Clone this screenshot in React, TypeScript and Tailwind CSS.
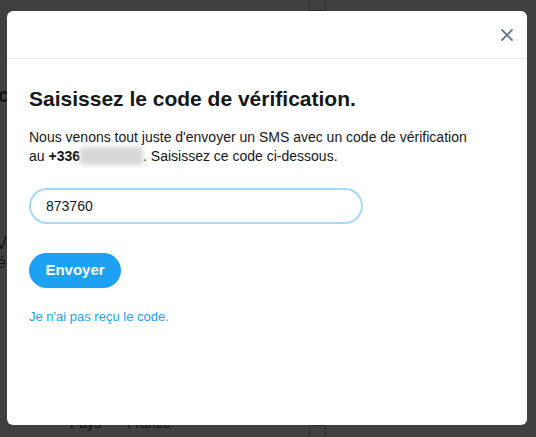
import { useState } from 'react'

// Backdrop page (dimmed) with the verification modal on top
export default function App() {
  const [code, setCode] = useState('873760')

  return (
    <div className="relative w-[536px] h-[437px] overflow-hidden bg-[#404040] font-['Liberation_Sans',Arial,sans-serif]">
      {/* Dimmed page behind the overlay */}
      <div className="absolute inset-0 text-[#111]">
        <div className="absolute left-[309px] top-[-4px] w-[17px] h-[15px] border border-[#2a2a2a] rounded-[2px]" />
        <span className="absolute left-[-2px] top-[80px] text-[20px] font-bold">c</span>
        <span className="absolute left-[-4px] top-[232px] text-[16px]">Ve</span>
        <span className="absolute left-[-3px] top-[251px] text-[16px]">é</span>
        <span className="absolute left-[70px] top-[413px] text-[14px]">Pays</span>
        <span className="absolute left-[127px] top-[413px] text-[14px]">France</span>
        <div className="absolute left-[309px] top-[425px] w-[17px] h-[15px] border border-[#2a2a2a] rounded-[2px]" />
      </div>

      {/* Modal */}
      <div className="relative pt-[11px] pl-[7px]">
        <div className="w-[520px] h-[414px] bg-white rounded-[6px] flex flex-col">
          <div className="h-[48px] border-b border-[#e6ecf0] flex items-center justify-end pr-[14px]">
            <button className="w-[12px] h-[12px] flex items-center justify-center">
              <svg width="12" height="12" viewBox="0 0 12 12">
                <path d="M1 1 L11 11 M11 1 L1 11" stroke="#657786" strokeWidth="1.8" strokeLinecap="round" />
              </svg>
            </button>
          </div>

          <div className="px-[22px] pt-[27px] flex flex-col">
            <h1 className="text-[21px] leading-[26px] font-bold text-[#14171a]">
              Saisissez le code de vérification.
            </h1>
            <p className="mt-[16px] text-[14px] leading-[19px] text-[#14171a]">
              Nous venons tout juste d'envoyer un SMS avec un code de vérification
              <br />
              au <span className="font-bold">+336</span>
              <span className="inline-block w-[63px] h-[18px] align-top bg-[#d8d8d8] blur-[2px]" />. Saisissez ce code ci-dessous.
            </p>

            <input
              type="text"
              value={code}
              onChange={(e) => setCode(e.target.value)}
              className="mt-[22px] w-[334px] h-[36px] rounded-full border-2 border-[#a4d9f9] px-[15px] text-[14px] text-[#14171a] outline-none"
            />

            <button className="mt-[29px] self-start w-[92px] h-[35px] rounded-full bg-[#1da1f2] text-white text-[15px] font-bold">
              Envoyer
            </button>

            <a href="#" className="mt-[21px] text-[13px] leading-[16px] text-[#1da1f2]">
              Je n'ai pas reçu le code.
            </a>
          </div>
        </div>
      </div>
    </div>
  )
}
